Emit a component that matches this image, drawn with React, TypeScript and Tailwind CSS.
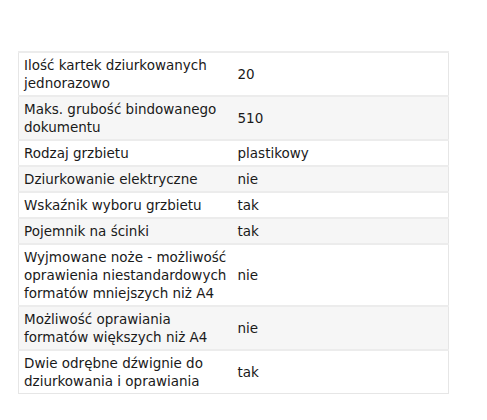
const rows: Array<[string, string]> = [
  ['Ilość kartek dziurkowanych jednorazowo', '20'],
  ['Maks. grubość bindowanego dokumentu', '510'],
  ['Rodzaj grzbietu', 'plastikowy'],
  ['Dziurkowanie elektryczne', 'nie'],
  ['Wskaźnik wyboru grzbietu', 'tak'],
  ['Pojemnik na ścinki', 'tak'],
  ['Wyjmowane noże - możliwość oprawienia niestandardowych formatów mniejszych niż A4', 'nie'],
  ['Możliwość oprawiania formatów większych niż A4', 'nie'],
  ['Dwie odrębne dźwignie do dziurkowania i oprawiania', 'tak'],
];

export default function App() {
  return (
    <div className="min-h-screen bg-white pt-[51px] pl-[18px] font-['DejaVu_Sans',sans-serif] text-[13.5px] leading-[18px] text-[#1a1a1a]">
      <table className="w-[431px] border-collapse border border-[#e6e6e6]">
        <tbody>
          {rows.map(([label, value], i) => (
            <tr key={i} className={`border-t-2 border-[#ececec] ${i % 2 === 1 ? 'bg-[#f6f6f6]' : 'bg-white'}`}>
              <td className="w-[214px] px-[5px] py-[3px] align-middle">{label}</td>
              <td className="px-[5px] py-[3px] align-middle">{value}</td>
            </tr>
          ))}
        </tbody>
      </table>
    </div>
  );
}
